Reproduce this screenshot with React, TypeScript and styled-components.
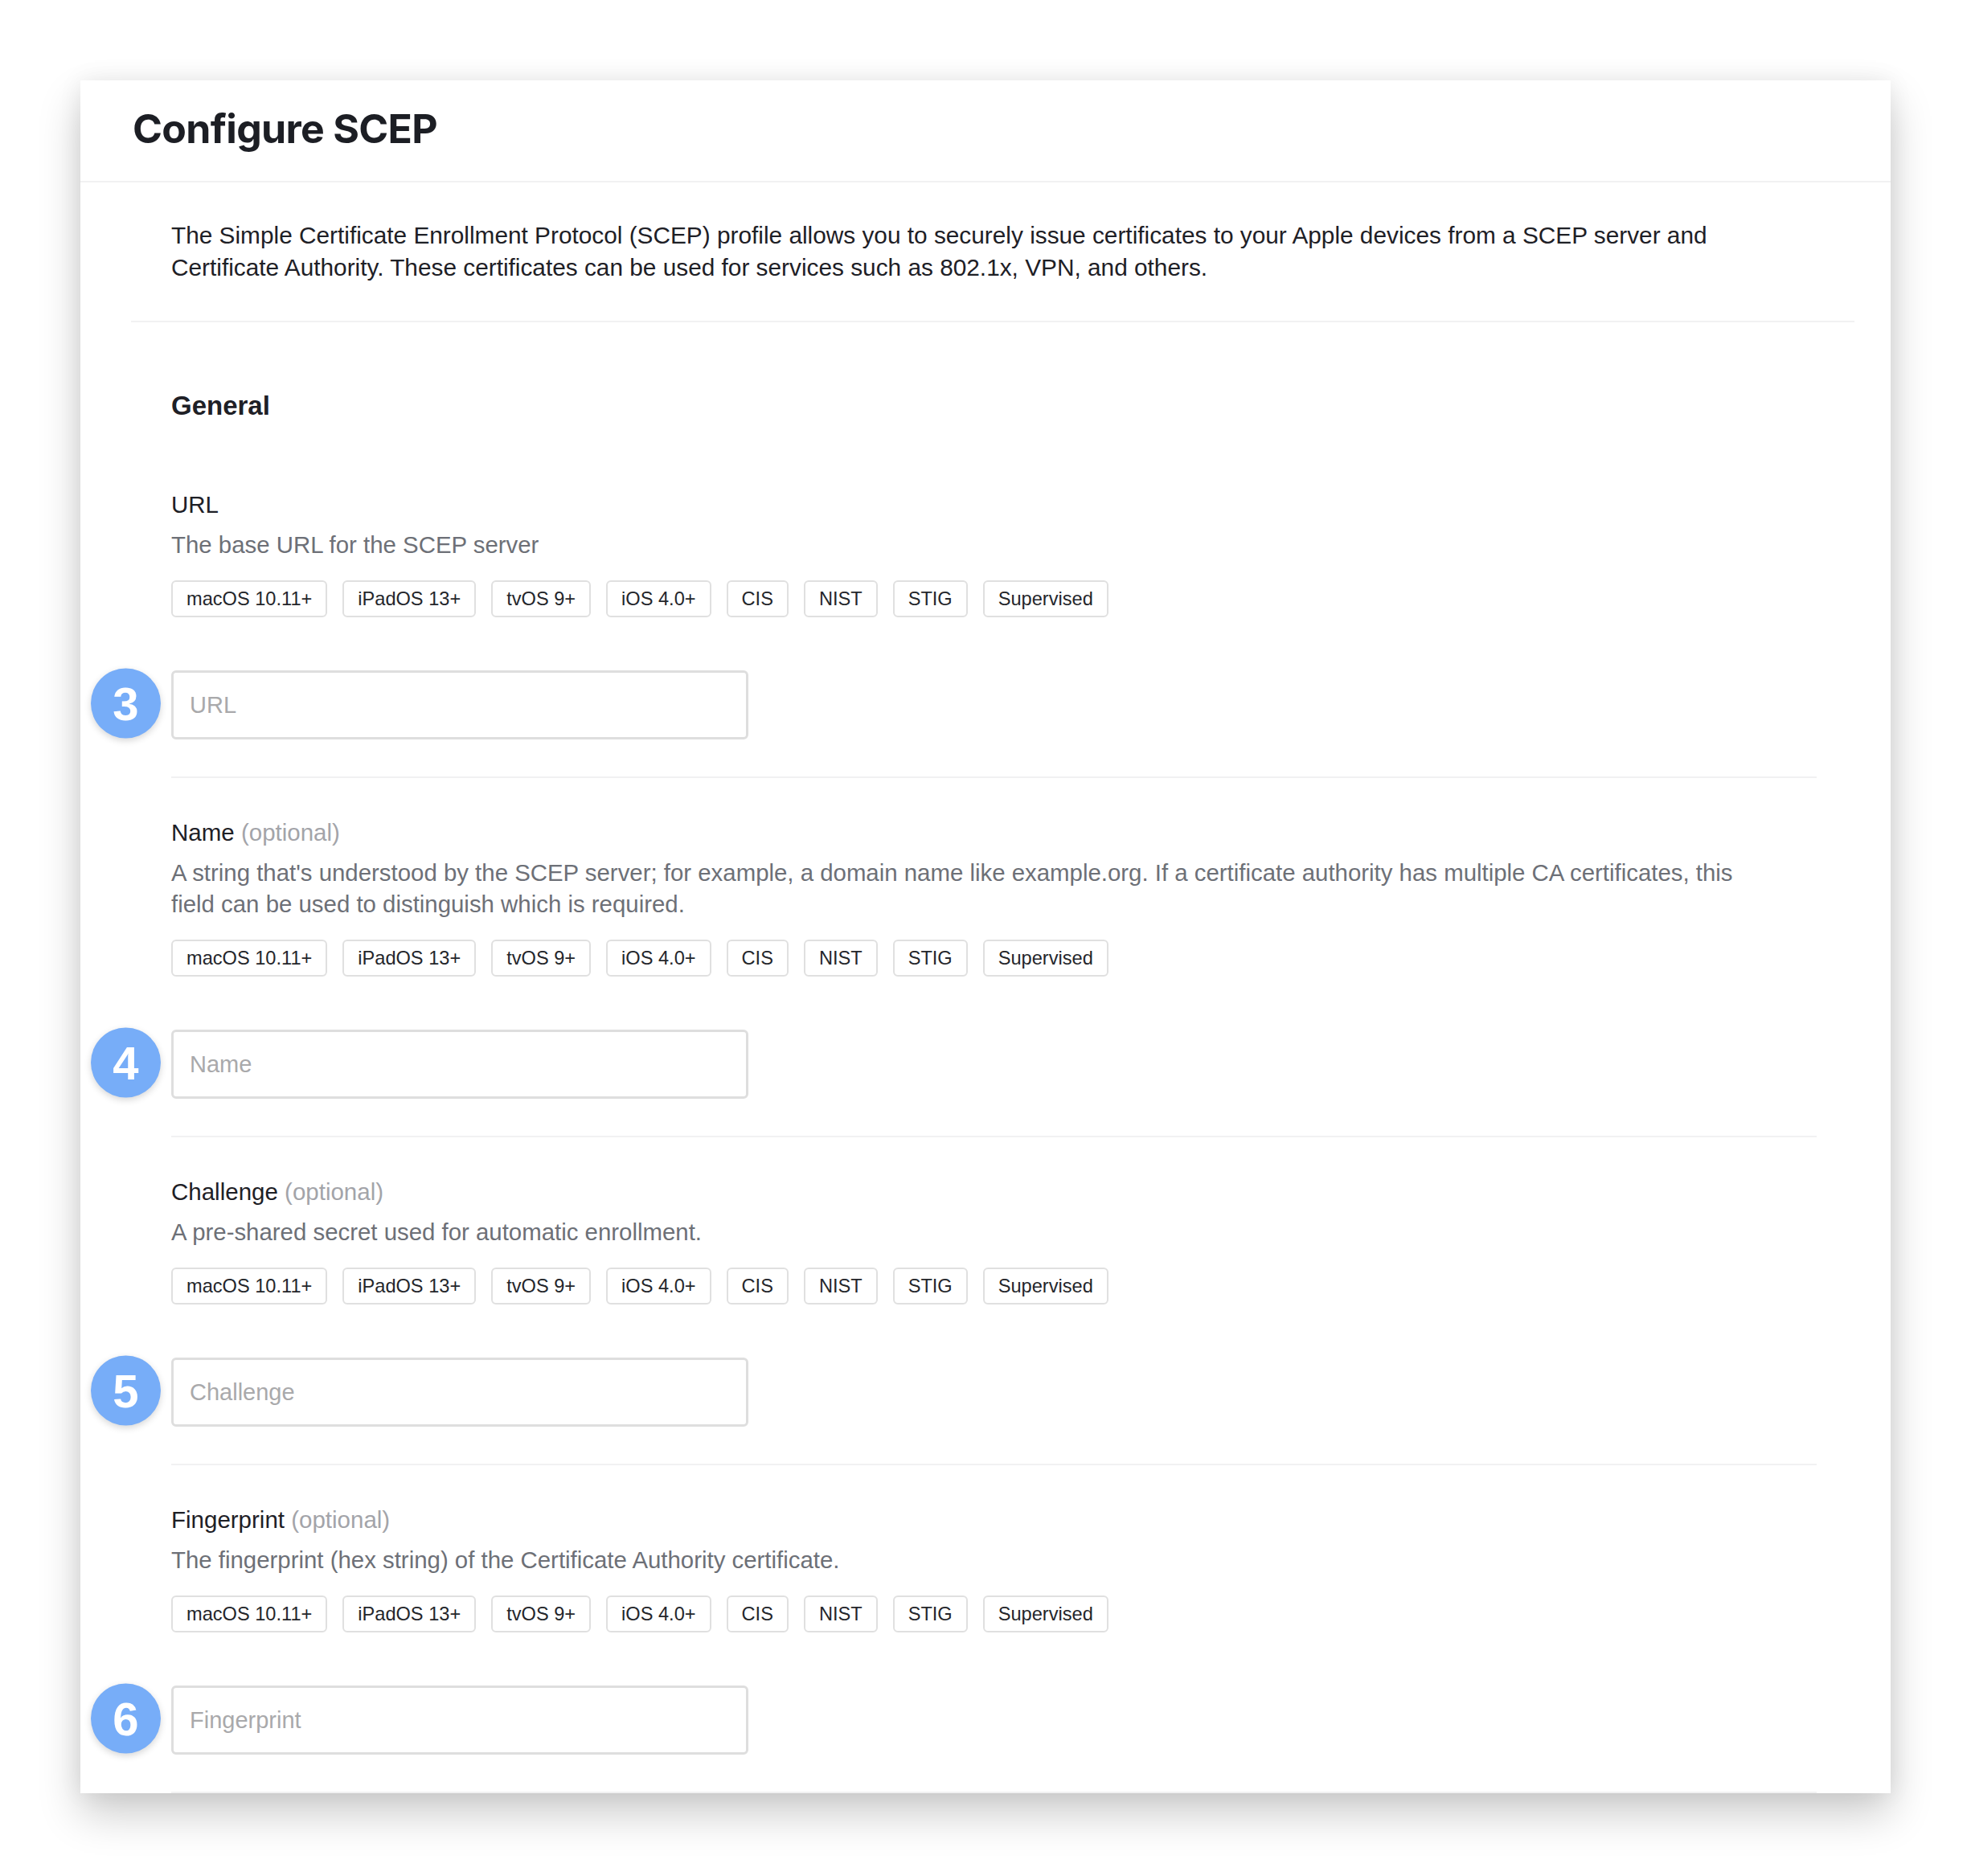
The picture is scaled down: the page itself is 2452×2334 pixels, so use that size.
import React from 'react';
import styled, { createGlobalStyle } from 'styled-components';

const GlobalStyle = createGlobalStyle`
  html, body {
    margin: 0;
    padding: 0;
    background: #ffffff;
  }
  body {
    font-family: "Liberation Sans", Arial, sans-serif;
    color: #1e2026;
  }
`;

const Page = styled.div`
  width: 2452px;
  min-height: 2334px;
  padding: 100px;
  box-sizing: border-box;
`;

const Card = styled.div`
  width: 2252px;
  background: #ffffff;
  box-shadow: 0 26px 50px rgba(0, 0, 0, 0.2), 0 0 28px rgba(0, 0, 0, 0.07);
`;

const Header = styled.header`
  height: 127px;
  display: flex;
  align-items: center;
  padding: 0 0 5px 65px;
  box-sizing: border-box;
  border-bottom: 2px solid #f1f1f2;
`;

const Title = styled.h1`
  margin: 0;
  font-family: Inter, "Liberation Sans", sans-serif;
  font-weight: 700;
  font-size: 50px;
  letter-spacing: -0.7px;
  color: #1c1e24;
`;

const Intro = styled.div`
  margin: 0 45px 0 63px;
  padding: 46px 0 46px 50px;
  border-bottom: 2px solid #f1f1f2;
`;

const IntroText = styled.p`
  margin: 0;
  font-size: 29.8px;
  line-height: 40px;
  color: #1e2026;
  max-width: 2010px;
`;

const Sections = styled.div`
  padding: 0 92px 0 113px;
`;

const GroupTitle = styled.h2`
  margin: 84px 0 0;
  font-size: 33px;
  line-height: 40px;
  font-weight: 700;
  color: #1e2026;
`;

const Field = styled.section<{ $first?: boolean }>`
  padding-top: ${(p) => (p.$first ? '83px' : '48px')};
  padding-bottom: 46px;
  border-bottom: 2px solid #f1f1f2;
`;

const Label = styled.div`
  font-size: 29.5px;
  line-height: 40px;
  color: #1e2026;
`;

const Optional = styled.span`
  color: #a3a4a9;
`;

const Help = styled.p`
  margin: 10px 0 0;
  max-width: 2000px;
  font-size: 29.4px;
  line-height: 39px;
  color: #6d7077;
`;

const Tags = styled.div`
  display: flex;
  gap: 19px;
  margin-top: 25px;
`;

const Tag = styled.span`
  height: 46px;
  box-sizing: border-box;
  display: inline-flex;
  align-items: center;
  padding: 0 17px;
  border: 2px solid #e0e0e0;
  border-radius: 6px;
  font-size: 23.6px;
  color: #24262b;
`;

const InputRow = styled.div`
  position: relative;
  margin-top: 66px;
  width: 718px;
`;

const Input = styled.input`
  display: block;
  width: 100%;
  height: 86px;
  box-sizing: border-box;
  border: 3px solid #dedede;
  border-radius: 6px;
  padding: 0 20px;
  font-family: "Liberation Sans", Arial, sans-serif;
  font-size: 29px;
  color: #1e2026;
  outline: none;
  &::placeholder {
    color: #a9a9ab;
  }
`;

const StepBadge = styled.div`
  position: absolute;
  left: -100px;
  top: 50%;
  transform: translateY(calc(-50% - 2px));
  width: 87px;
  height: 87px;
  border-radius: 50%;
  background: #77adf8;
  color: #ffffff;
  display: flex;
  align-items: center;
  justify-content: center;
  font-weight: 700;
  font-size: 58px;
  box-shadow: 0 3px 8px rgba(0, 0, 0, 0.16);
`;

const PLATFORM_TAGS = ['macOS 10.11+', 'iPadOS 13+', 'tvOS 9+', 'iOS 4.0+', 'CIS', 'NIST', 'STIG', 'Supervised'];

type FieldDef = {
  step: number;
  label: string;
  optional?: boolean;
  help: string;
  placeholder: string;
};

const FIELDS: FieldDef[] = [
  { step: 3, label: 'URL', help: 'The base URL for the SCEP server', placeholder: 'URL' },
  {
    step: 4,
    label: 'Name',
    optional: true,
    help: "A string that's understood by the SCEP server; for example, a domain name like example.org. If a certificate authority has multiple CA certificates, this field can be used to distinguish which is required.",
    placeholder: 'Name',
  },
  {
    step: 5,
    label: 'Challenge',
    optional: true,
    help: 'A pre-shared secret used for automatic enrollment.',
    placeholder: 'Challenge',
  },
  {
    step: 6,
    label: 'Fingerprint',
    optional: true,
    help: 'The fingerprint (hex string) of the Certificate Authority certificate.',
    placeholder: 'Fingerprint',
  },
];

const App = () => {
  return (
    <>
      <GlobalStyle />
      <Page>
        <Card>
          <Header>
            <Title>Configure SCEP</Title>
          </Header>
          <Intro>
            <IntroText>
              The Simple Certificate Enrollment Protocol (SCEP) profile allows you to securely issue certificates to your
              Apple devices from a SCEP server and Certificate Authority. These certificates can be used for services such
              as 802.1x, VPN, and others.
            </IntroText>
          </Intro>
          <Sections>
            <GroupTitle>General</GroupTitle>
            {FIELDS.map((field, i) => (
              <Field key={field.label} $first={i === 0}>
                <Label>
                  {field.label}
                  {field.optional && <Optional> (optional)</Optional>}
                </Label>
                <Help>{field.help}</Help>
                <Tags>
                  {PLATFORM_TAGS.map((t) => (
                    <Tag key={t}>{t}</Tag>
                  ))}
                </Tags>
                <InputRow>
                  <StepBadge>{field.step}</StepBadge>
                  <Input placeholder={field.placeholder} />
                </InputRow>
              </Field>
            ))}
          </Sections>
        </Card>
      </Page>
    </>
  );
};

export default App;
